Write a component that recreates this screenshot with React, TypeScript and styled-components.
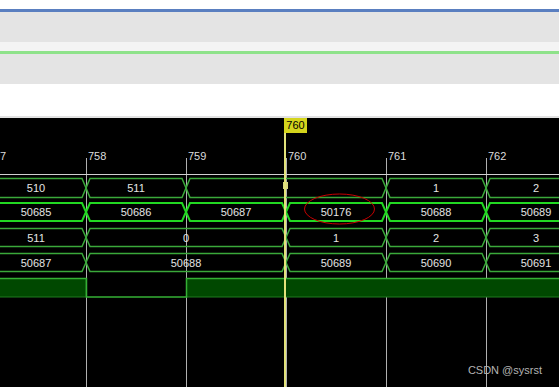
import { FC } from "react";
import styled, { createGlobalStyle } from "styled-components";

const GlobalStyle = createGlobalStyle`
  html, body {
    margin: 0;
    padding: 0;
    background: #ffffff;
  }
  body {
    font-family: "Liberation Sans", Arial, sans-serif;
  }
`;

const Page = styled.div`
  display: flex;
  flex-direction: column;
  width: 559px;
  height: 387px;
  overflow: hidden;
`;

const TopGap = styled.div`
  height: 9px;
  background: #ffffff;
`;

const SignalStrip = styled.div<{ $accent: string }>`
  height: 30px;
  border-top: 3px solid ${(p) => p.$accent};
  background: #e4e4e4;
`;

const StripGap = styled.div`
  height: 9px;
  background: #f4f4f4;
`;

const BlankArea = styled.div`
  height: 32px;
  background: #ffffff;
  border-bottom: 2px solid #e2e2e2;
`;

const WaveCanvas = styled.div`
  position: relative;
  flex: 1;
  background: #000000;
  overflow: hidden;
`;

const WaveSvg = styled.svg`
  display: block;
  width: 559px;
  height: 269px;
  font-family: "Liberation Sans", Arial, sans-serif;
  font-size: 11px;
`;

const CursorFlag = styled.div`
  position: absolute;
  left: 284px;
  top: 0;
  width: 23px;
  height: 15px;
  background: #d4d41c;
  color: #000000;
  font-size: 11px;
  line-height: 15px;
  text-align: center;
`;

const Watermark = styled.div`
  position: absolute;
  right: 17px;
  bottom: 11px;
  color: #b4b4b4;
  font-size: 11px;
`;

// first label is only partly in view, like in the capture
const TICKS = [-14, 86, 186, 286, 386, 486];
const TICK_LABELS = ["7", "758", "759", "760", "761", "762"];

interface BusRowProps {
  bounds: number[];
  values: string[];
  top: number;
  bottom: number;
  color: string;
  width: number;
}

const BusRow: FC<BusRowProps> = ({ bounds, values, top, bottom, color, width }) => {
  const mid = (top + bottom) / 2;
  const h = 4;
  return (
    <g>
      {values.map((v, i) => {
        const a = bounds[i];
        const b = bounds[i + 1];
        const d = `M ${a + h} ${top} L ${b - h} ${top} L ${b} ${mid} L ${b - h} ${bottom} L ${a + h} ${bottom} L ${a} ${mid} Z`;
        return (
          <g key={i}>
            <path d={d} fill="none" stroke={color} strokeWidth={width} />
            <text x={(a + b) / 2} y={mid + 4} fill="#e4e4e4" textAnchor="middle">
              {v}
            </text>
          </g>
        );
      })}
    </g>
  );
};

export default function App() {
  return (
    <>
      <GlobalStyle />
      <Page>
        <TopGap />
        <SignalStrip $accent="#5a7fc0" />
        <StripGap />
        <SignalStrip $accent="#8ee28a" />
        <BlankArea />
        <WaveCanvas>
          <WaveSvg viewBox="0 118 559 269">
            {TICKS.map((x, i) => (
              <g key={x}>
                <line x1={x + 0.5} y1={158} x2={x + 0.5} y2={387} stroke="#b0b0b0" strokeWidth={1} />
                <text x={i === 0 ? 0 : x + 2} y={160} fill="#dcdcdc">
                  {TICK_LABELS[i]}
                </text>
              </g>
            ))}
            <line x1={0} y1={174.5} x2={559} y2={174.5} stroke="#d0d0d0" strokeWidth={1} />

            <BusRow
              bounds={[-14, 86, 186, 386, 486, 586]}
              values={["510", "511", "", "1", "2"]}
              top={178.5}
              bottom={197.5}
              color="#3aa83a"
              width={1.5}
            />
            <rect x={283} y={182} width={5} height={7} fill="#d8d880" />
            <BusRow
              bounds={[-14, 86, 186, 286, 386, 486, 586]}
              values={["50685", "50686", "50687", "50176", "50688", "50689"]}
              top={203}
              bottom={221}
              color="#22d822"
              width={2}
            />
            <BusRow
              bounds={[-14, 86, 286, 386, 486, 586]}
              values={["511", "0", "1", "2", "3"]}
              top={228.5}
              bottom={246.5}
              color="#3aa83a"
              width={1.5}
            />
            <BusRow
              bounds={[-14, 86, 286, 386, 486, 586]}
              values={["50687", "50688", "50689", "50690", "50691"]}
              top={253.5}
              bottom={271.5}
              color="#3aa83a"
              width={1.5}
            />

            <rect x={-14} y={278.5} width={100} height={18.5} fill="#004800" stroke="#1f7a1f" />
            <rect x={186.5} y={278.5} width={400} height={18.5} fill="#004800" stroke="#1f7a1f" />
            <path
              d="M -14 278.5 L 86.5 278.5 L 86.5 297 L 186.5 297 L 186.5 278.5 L 586 278.5"
              fill="none"
              stroke="#35b035"
              strokeWidth={1.5}
            />

            <ellipse cx={339.5} cy={209} rx={35} ry={15} fill="none" stroke="#c80000" strokeWidth={1} />

            <rect x={284} y={133} width={2} height={254} fill="#e2e27a" />
          </WaveSvg>
          <CursorFlag>760</CursorFlag>
          <Watermark>CSDN @sysrst</Watermark>
        </WaveCanvas>
      </Page>
    </>
  );
}
